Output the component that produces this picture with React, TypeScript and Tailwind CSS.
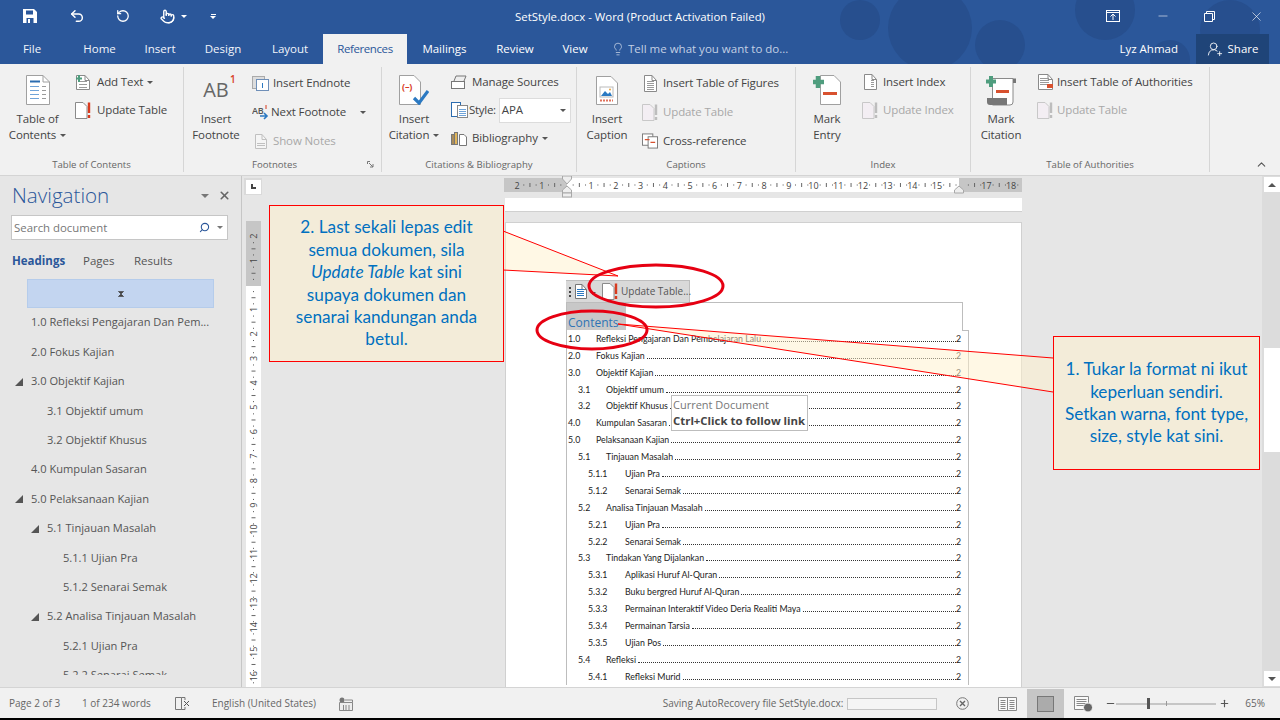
import { Pointer, RotateCcw, Undo2, UserRoundPlus, Lightbulb, X, Minus, Search, ChevronUp, Plus } from 'lucide-react';
import type { ReactNode } from 'react';

const Caret = ({ className = 'border-t-[#555]' }: { className?: string }) => (
    <span className={`inline-block w-0 h-0 border-x-[3px] border-x-transparent border-t-[3px] ${className}`} />
);

// small sheet of paper with a folded corner, used by most ribbon icons
const Sheet = ({ w = 16, h = 20, stroke = '#8a8a8a', fill = '#fff', children }: { w?: number; h?: number; stroke?: string; fill?: string; children?: ReactNode }) => (
    <svg width={w} height={h} viewBox={`0 0 ${w} ${h}`} className="shrink-0">
        <path d={`M.5 .5H${w - 5}L${w - 0.5} 5.5V${h - 0.5}H.5Z`} fill={fill} stroke={stroke} />
        <path d={`M${w - 5} .5V5.5H${w - 0.5}`} fill="none" stroke={stroke} />
        {children}
    </svg>
);

const lines = (x1: number, x2: number, ys: number[], color = '#9a9a9a') =>
    ys.map((y) => <path key={y} d={`M${x1} ${y + 0.5}H${x2}`} stroke={color} />);

const UpdateIcon = ({ muted = false }: { muted?: boolean }) => (
    <svg width="17" height="17" viewBox="0 0 17 17" className="shrink-0">
        <path d="M.5 .5H8L12 4.5V16.5H.5Z" fill={muted ? '#f3eef3' : '#fff'} stroke={muted ? '#c8c8c8' : '#8a8a8a'} />
        <path d="M14 .5V11M14 13V16" stroke={muted ? '#bdbdbd' : '#d83b1f'} strokeWidth="2.4" />
    </svg>
);

const TocIcon = () => (
    <svg width="24" height="30" viewBox="0 0 24 30">
        <path d="M.5 .5H17L23.5 7V29.5H.5Z" fill="#fff" stroke="#a0a0a0" />
        <path d="M17 .5V7H23.5" fill="none" stroke="#a0a0a0" />
        <path d="M4 6.5H14" stroke="#2b6cb0" strokeWidth="2" />
        {[11, 15, 19, 23].map((y) => (
            <g key={y}>
                <path d={`M4 ${y + 0.5}H13`} stroke="#6fa3d8" />
                <path d={`M16 ${y + 0.5}H20`} stroke="#9a9a9a" />
            </g>
        ))}
    </svg>
);

const CitationIcon = () => (
    <svg width="30" height="30" viewBox="0 0 30 30">
        <path d="M.5 .5H15L21.5 7V29.5H.5Z" fill="#fff" stroke="#a0a0a0" />
        <text x="3" y="15" fontSize="9" fontWeight="700" fill="#d83b1f" fontFamily="Open Sans">(–)</text>
        <path d="M15 23L20 28L29 16" fill="none" stroke="#2b79c2" strokeWidth="3.2" />
    </svg>
);

const CaptionIcon = () => (
    <svg width="22" height="29" viewBox="0 0 22 29">
        <path d="M.5 .5H15L21.5 7V28.5H.5Z" fill="#fff" stroke="#a0a0a0" />
        <rect x="4" y="11" width="13" height="10" fill="#fff" stroke="#bbb" />
        <path d="M5 20L9 15L12 18L14 16L16 20Z" fill="#2b79c2" />
        <circle cx="14" cy="13.5" r="1" fill="#e8a33d" />
        <path d="M4 24.5H17" stroke="#e0725c" strokeWidth="2" strokeDasharray="2 1" />
    </svg>
);

const MarkEntryIcon = () => (
    <svg width="28" height="30" viewBox="0 0 28 30">
        <path d="M7.5 .5H21L27.5 7V29.5H7.5Z" fill="#fff" stroke="#a0a0a0" />
        <path d="M5 1V13M0 7H11" stroke="#4f9d7e" strokeWidth="4.5" />
        <path d="M10 18.5H24" stroke="#d8512f" strokeWidth="3" />
    </svg>
);

const MarkCitationIcon = () => (
    <svg width="32" height="31" viewBox="0 0 32 31">
        <path d="M7.5 3.5H28V27Q28 30 25 30H7.5Z" fill="#fff" stroke="#8a8a8a" />
        <path d="M28 3.5H31V8H28" fill="#777" />
        <path d="M2 23H22V30H5Q2 30 2 27Z" fill="#777" />
        <path d="M6 1V12M1 6.5H11" stroke="#4f9d7e" strokeWidth="4" />
        <path d="M11 16.5H24" stroke="#d8512f" strokeWidth="3" />
    </svg>
);

const RibbonBig = ({ icon, label, second, caret, className }: { icon: ReactNode; label: string; second: ReactNode; caret?: boolean; className: string }) => (
    <div className={`flex flex-col items-center shrink-0 pt-[7px] ${className}`}>
        <div className="h-[32px] flex items-center justify-center">{icon}</div>
        <div className="mt-[5px] text-center leading-[16px] whitespace-nowrap">
            {label}
            <br />
            {second}
            {caret && <Caret className="ml-[4px] mb-[2px] border-t-[#555]" />}
        </div>
    </div>
);

const RibbonSmall = ({ icon, label, muted, caret, textClass = 'ml-[6px]', iconClass = 'w-[16px]' }: { icon: ReactNode; label: string; muted?: boolean; caret?: boolean; textClass?: string; iconClass?: string }) => (
    <div className={`flex items-center h-[20px] whitespace-nowrap ${muted ? 'text-[#a8a8a8]' : ''}`}>
        <span className={`flex justify-center shrink-0 ${iconClass}`}>{icon}</span>
        <span className={textClass}>{label}</span>
        {caret && <Caret className="ml-[4px] border-t-[#555]" />}
    </div>
);

const RibbonGroup = ({ label, className, children, labelClass = '' }: { label: string; className: string; children: ReactNode; labelClass?: string }) => (
    <div className={`relative flex flex-col h-[105px] mt-[3px] border-r border-[#d6d6d6] shrink-0 ${className}`}>
        <div className="flex flex-1">{children}</div>
        <div className={`h-[14px] leading-[14px] text-center text-[9.6px] tracking-normal text-[#666] ${labelClass}`}>{label}</div>
    </div>
);

const tabs = [
    { name: 'File', cls: 'w-[64px]' },
    { name: 'Home', cls: 'w-[71px]' },
    { name: 'Insert', cls: 'w-[50px]' },
    { name: 'Design', cls: 'w-[76px]' },
    { name: 'Layout', cls: 'w-[58px]' },
];

const navItems = [
    { t: '1.0 Refleksi Pengajaran Dan Pem...', pad: 'pl-[31px]' },
    { t: '2.0 Fokus Kajian', pad: 'pl-[31px]' },
    { t: '3.0 Objektif Kajian', pad: 'pl-[31px]', tri: 'left-[15px]' },
    { t: '3.1 Objektif umum', pad: 'pl-[47px]' },
    { t: '3.2 Objektif Khusus', pad: 'pl-[47px]' },
    { t: '4.0 Kumpulan Sasaran', pad: 'pl-[31px]' },
    { t: '5.0 Pelaksanaan Kajian', pad: 'pl-[31px]', tri: 'left-[15px]' },
    { t: '5.1 Tinjauan Masalah', pad: 'pl-[47px]', tri: 'left-[31px]' },
    { t: '5.1.1 Ujian Pra', pad: 'pl-[63px]' },
    { t: '5.1.2 Senarai Semak', pad: 'pl-[63px]' },
    { t: '5.2 Analisa Tinjauan Masalah', pad: 'pl-[47px]', tri: 'left-[31px]' },
    { t: '5.2.1 Ujian Pra', pad: 'pl-[63px]' },
    { t: '5.2.2 Senarai Semak', pad: 'pl-[63px]' },
];

const toc: [number, string, string][] = [
    [1, '1.0', 'Refleksi Pengajaran Dan Pembelajaran Lalu'],
    [1, '2.0', 'Fokus Kajian'],
    [1, '3.0', 'Objektif Kajian'],
    [2, '3.1', 'Objektif umum'],
    [2, '3.2', 'Objektif Khusus'],
    [1, '4.0', 'Kumpulan Sasaran'],
    [1, '5.0', 'Pelaksanaan Kajian'],
    [2, '5.1', 'Tinjauan Masalah'],
    [3, '5.1.1', 'Ujian Pra'],
    [3, '5.1.2', 'Senarai Semak'],
    [2, '5.2', 'Analisa Tinjauan Masalah'],
    [3, '5.2.1', 'Ujian Pra'],
    [3, '5.2.2', 'Senarai Semak'],
    [2, '5.3', 'Tindakan Yang Dijalankan'],
    [3, '5.3.1', 'Aplikasi Huruf Al-Quran'],
    [3, '5.3.2', 'Buku bergred Huruf Al-Quran'],
    [3, '5.3.3', 'Permainan Interaktif Video Deria Realiti Maya'],
    [3, '5.3.4', 'Permainan Tarsia'],
    [3, '5.3.5', 'Ujian Pos'],
    [2, '5.4', 'Refleksi'],
    [3, '5.4.1', 'Refleksi Murid'],
];

const levelNum: Record<number, string> = {
    1: 'pl-[1px] w-[29px]',
    2: 'pl-[11px] w-[39px]',
    3: 'pl-[21px] w-[58px]',
};

const rulerUnits = Array.from({ length: 21 }, (_, i) => i - 2);

const HRuler = () => {
    const x0 = 62.5;
    const step = 24.7;
    return (
        <svg width="518" height="22" viewBox="0 0 518 22" className="overflow-visible block">
            <rect x="0" y="0" width="518" height="14" fill="#c6c6c6" />
            <rect x="63" y="0" width="392" height="14" fill="#fff" />
            {rulerUnits.map((n) => {
                const x = x0 + n * step;
                return (
                    <g key={n}>
                        {n !== 0 && n !== 16 && x < 516 && (
                            <text x={x} y="10.5" textAnchor="middle" fontSize="9" fill="#444" fontFamily="Open Sans">
                                {Math.abs(n)}
                            </text>
                        )}
                        {[0.25, 0.75].map((f) =>
                            x + f * step > 2 && x + f * step < 516 ? <rect key={f} x={x + f * step} y="6.5" width="1" height="1" fill="#555" /> : null,
                        )}
                        {x + step / 2 < 516 && <rect x={x + step / 2} y="5" width="1" height="4" fill="#666" />}
                    </g>
                );
            })}
            <path d="M58.5 -2H67.5V1L63 6L58.5 1Z" fill="#eee" stroke="#a8a8a8" />
            <path d="M63 8L67.5 12V15H58.5V12Z" fill="#eee" stroke="#a8a8a8" />
            <rect x="58.5" y="15" width="9" height="4" fill="#eee" stroke="#a8a8a8" />
            <path d="M455 8L459.5 12V15H450.5V12Z" fill="#eee" stroke="#a8a8a8" />
        </svg>
    );
};

const VRuler = () => {
    const y0 = 109;
    const step = 24.45;
    return (
        <svg width="15" height="511" viewBox="0 0 15 511" className="block">
            <rect x="0" y="45" width="15" height="65" fill="#c6c6c6" />
            <rect x="0" y="110" width="15" height="401" fill="#fff" />
            {rulerUnits.map((n) => {
                const y = y0 + n * step;
                return (
                    <g key={n}>
                        {n !== 0 && (
                            <text x="7.5" y={y} transform={`rotate(-90 7.5 ${y})`} textAnchor="middle" dominantBaseline="central" fontSize="9" fill="#444" fontFamily="Open Sans">
                                {Math.abs(n)}
                            </text>
                        )}
                        {[0.25, 0.75].map((f) => (y + f * step > 50 ? <rect key={f} x="7" y={y + f * step} width="1" height="1" fill="#555" /> : null))}
                        {y + step / 2 > 50 && <rect x="5.5" y={y + step / 2} width="4" height="1" fill="#666" />}
                    </g>
                );
            })}
        </svg>
    );
};

const Overlay = () => (
    <svg width="1280" height="720" viewBox="0 0 1280 720" className="absolute inset-0 pointer-events-none">
        <path d="M503 231L618 276L503 270" fill="#fff2cc" fillOpacity="0.5" stroke="#f00" />
        <path d="M1053 358L618 324L1053 392" fill="#fff2cc" fillOpacity="0.5" stroke="#f00" />
        <ellipse cx="656" cy="286" rx="67" ry="21" fill="none" stroke="#e60012" strokeWidth="3" />
        <ellipse cx="592" cy="330" rx="55" ry="19" fill="none" stroke="#e60012" strokeWidth="3" />
    </svg>
);

export default function App() {
    return (
        <div className="relative w-[1280px] h-[720px] overflow-hidden flex flex-col bg-black font-['Open_Sans',sans-serif] text-[11.5px] tracking-[-0.12px] text-[#444]">
            {/* title bar + tabs */}
            <div className="relative h-[64px] shrink-0 bg-[#2b579a] text-white overflow-hidden tracking-normal">
                <svg width="480" height="64" viewBox="0 0 480 64" className="absolute left-[780px] top-0">
                    <g fill="#274f8e">
                        <circle cx="150" cy="28" r="42" />
                        <circle cx="80" cy="20" r="20" />
                        <circle cx="220" cy="45" r="25" />
                        <circle cx="325" cy="10" r="30" />
                        <circle cx="450" cy="30" r="30" />
                        <circle cx="390" cy="60" r="20" />
                    </g>
                </svg>
                <div className="relative flex items-center h-[32px]">
                    <span className="w-[60px] flex justify-center">
                        <svg width="14" height="14" viewBox="0 0 14 14">
                            <path d="M0 0H11L14 3V14H0Z" fill="#fff" />
                            <rect x="3" y="1.5" width="7" height="4" fill="#2b579a" />
                            <rect x="3.5" y="9" width="7" height="5" fill="#2b579a" />
                            <rect x="5" y="10" width="2" height="4" fill="#fff" />
                        </svg>
                    </span>
                    <span className="w-[34px] flex justify-center">
                        <Undo2 size={16} strokeWidth={2.2} />
                    </span>
                    <span className="w-[58px] flex justify-center">
                        <RotateCcw size={14} strokeWidth={2.2} />
                    </span>
                    <span className="w-[30px] flex justify-center">
                        <Pointer size={15} strokeWidth={2.2} />
                    </span>
                    <Caret className="border-t-white ml-[-1px]" />
                    <span className="ml-[23px] flex flex-col items-center gap-[1px]">
                        <span className="w-[5px] h-px bg-white" />
                        <Caret className="border-t-white" />
                    </span>
                    <div className="absolute left-0 right-0 top-[9px] text-center text-[11.4px] leading-[16px]">SetStyle.docx - Word (Product Activation Failed)</div>
                    <div className="absolute right-0 top-0 h-[32px] flex items-center">
                        <svg width="14" height="12" viewBox="0 0 14 12" className="mr-[36px]">
                            <rect x=".5" y=".5" width="13" height="11" fill="none" stroke="#fff" />
                            <path d="M.5 2.5H13.5M7 10V4.5M4.5 6.5L7 4L9.5 6.5" fill="none" stroke="#fff" />
                        </svg>
                        <Minus size={14} strokeWidth={1} className="mr-[34px]" />
                        <svg width="11" height="11" viewBox="0 0 11 11" className="mr-[34px]">
                            <path d="M.5 2.5H8.5V10.5H.5ZM2.5 2.5V.5H10.5V8.5H8.5" fill="none" stroke="#fff" />
                        </svg>
                        <X size={15} strokeWidth={1} className="mr-[16px]" />
                    </div>
                </div>
                <div className="absolute left-0 right-0 bottom-0 h-[30px] flex items-center text-[11.5px]">
                    {tabs.map((t) => (
                        <div key={t.name} className={`text-center text-[#f2f5fa] ${t.cls}`}>
                            {t.name}
                        </div>
                    ))}
                    <div className="ml-[4px] w-[84px] h-full bg-[#f1f1f1] text-[#2b579a] flex items-center justify-center tracking-[-0.4px]">References</div>
                    <div className="w-[75px] text-center">Mailings</div>
                    <div className="w-[66px] text-center">Review</div>
                    <div className="w-[54px] text-center">View</div>
                    <Lightbulb size={14} strokeWidth={1.2} className="ml-[9px] text-[#d5deec]" />
                    <div className="ml-[3px] text-[#c3d0e4]">Tell me what you want to do...</div>
                    <div className="ml-auto mr-[18px]">Lyz Ahmad</div>
                    <div className="mr-[11px] w-[73px] h-full bg-[#1f4478] flex items-center justify-center gap-[5px]">
                        <UserRoundPlus size={16} strokeWidth={1.3} />
                        Share
                    </div>
                </div>
            </div>

            {/* ribbon */}
            <div className="h-[112px] shrink-0 flex bg-[#f1f1f1] border-b border-[#d4d4d4]">
                <RibbonGroup label="Table of Contents" className="w-[184px]">
                    <RibbonBig icon={<TocIcon />} label="Table of" second="Contents" caret className="w-[75px]" />
                    <div className="flex flex-col gap-[8px] pt-[5px]">
                        <RibbonSmall
                            label="Add Text"
                            caret
                            icon={
                                <Sheet w={14} h={15}>
                                    {lines(3, 11, [6, 9, 12])}
                                    <path d="M3 0V7M0 3.5H6" stroke="#4f9d7e" strokeWidth="2" />
                                </Sheet>
                            }
                        />
                        <RibbonSmall label="Update Table" icon={<UpdateIcon />} />
                    </div>
                </RibbonGroup>
                <RibbonGroup label="Footnotes" className="w-[198px]" labelClass="pr-[16px]">
                    <RibbonBig
                        icon={
                            <span className="relative text-[20px] leading-none text-[#666]">
                                AB<span className="absolute top-[-6px] right-[-7px] text-[10px] font-semibold text-[#d83b1f]">1</span>
                            </span>
                        }
                        label="Insert"
                        second="Footnote"
                        className="w-[52px] ml-[6px]"
                    />
                    <div className="flex flex-col gap-[9px] pt-[6px] ml-[10px]">
                        <RibbonSmall
                            label="Insert Endnote"
                            iconClass="w-[17px]"
                            textClass="ml-[4px]"
                            icon={
                                <svg width="17" height="15" viewBox="0 0 17 15">
                                    <rect x=".5" y=".5" width="12" height="12" fill="#ddd" stroke="#aaa" />
                                    <rect x="4.5" y="3.5" width="12" height="11" fill="#fff" stroke="#6f8fb8" />
                                    <path d="M10.5 7V12" stroke="#2b79c2" />
                                </svg>
                            }
                        />
                        <div className="flex items-center">
                            <RibbonSmall
                                label="Next Footnote"
                                iconClass="w-[17px]"
                                textClass="ml-[2px]"
                                icon={
                                    <svg width="17" height="16" viewBox="0 0 17 16">
                                        <text x="0" y="10" fontSize="9" fill="#555" fontFamily="Open Sans" fontWeight="600">AB</text>
                                        <path d="M8 12H14M12 9L15 12L12 15" fill="none" stroke="#2b79c2" strokeWidth="1.6" />
                                        <path d="M14 1V5" stroke="#d83b1f" />
                                    </svg>
                                }
                            />
                            <Caret className="ml-[14px] border-t-[#555]" />
                        </div>
                        <RibbonSmall
                            label="Show Notes"
                            muted
                            iconClass="w-[17px]"
                            textClass="ml-[4px]"
                            icon={
                                <Sheet w={12} h={15} stroke="#c0c0c0" fill="#f5f5f5">
                                    {lines(2, 10, [9, 11], '#c0c0c0')}
                                </Sheet>
                            }
                        />
                    </div>
                    <svg width="7" height="7" viewBox="0 0 7 7" className="absolute right-[7px] bottom-[4px]">
                        <path d="M.5 3V.5H3M2 2L6 6M6 3V6H3" fill="none" stroke="#777" />
                    </svg>
                </RibbonGroup>
                <RibbonGroup label="Citations & Bibliography" className="w-[195px]">
                    <RibbonBig icon={<CitationIcon />} label="Insert" second="Citation" caret className="w-[58px] ml-[3px]" />
                    <div className="flex flex-col gap-[8px] pt-[5px] ml-[8px]">
                        <RibbonSmall
                            label="Manage Sources"
                            iconClass="w-[16px]"
                            textClass="ml-[5px]"
                            icon={
                                <svg width="16" height="14" viewBox="0 0 16 14">
                                    <rect x=".5" y="6.5" width="13" height="7" fill="#fff" stroke="#777" />
                                    <path d="M3 6L5 1H15L13 6" fill="#eee" stroke="#777" />
                                </svg>
                            }
                        />
                        <div className="flex items-center h-[20px]">
                            <svg width="17" height="16" viewBox="0 0 17 16" className="shrink-0">
                                <rect x=".5" y=".5" width="9" height="14" fill="#fff" stroke="#2b6cb0" />
                                <rect x="6.5" y="3.5" width="10" height="12" fill="#fff" stroke="#888" />
                                {lines(8, 15, [7, 9, 11, 13], '#6fa3d8')}
                            </svg>
                            <span className="ml-[1px] mr-[3px] tracking-tight">Style:</span>
                            <div className="w-[72px] h-[25px] my-[-3px] bg-white border border-[#dcdcdc] flex items-center justify-between pl-[2px] pr-[4px]">
                                APA
                                <Caret />
                            </div>
                        </div>
                        <RibbonSmall
                            label="Bibliography"
                            caret
                            textClass="ml-[5px]"
                            icon={
                                <svg width="16" height="16" viewBox="0 0 16 16">
                                    <rect x=".5" y="4.5" width="3" height="10" fill="#a98c5a" stroke="#777" />
                                    <rect x="3.5" y="2.5" width="3" height="12" fill="#e2b659" stroke="#777" />
                                    <path d="M8.5 4.5H13L15.5 7V15.5H8.5Z" fill="#fff" stroke="#777" />
                                </svg>
                            }
                        />
                    </div>
                </RibbonGroup>
                <RibbonGroup label="Captions" className="w-[219px]">
                    <RibbonBig icon={<CaptionIcon />} label="Insert" second="Caption" className="w-[60px]" />
                    <div className="flex flex-col gap-[9px] pt-[6px] ml-[5px]">
                        <RibbonSmall
                            label="Insert Table of Figures"
                            textClass="ml-[5px]"
                            iconClass="w-[16px]"
                            icon={<Sheet w={13} h={17}>{lines(3, 10, [6, 8, 10, 12, 14])}</Sheet>}
                        />
                        <RibbonSmall label="Update Table" muted textClass="ml-[5px]" iconClass="w-[16px]" icon={<UpdateIcon muted />} />
                        <RibbonSmall
                            label="Cross-reference"
                            textClass="ml-[5px]"
                            iconClass="w-[16px]"
                            icon={
                                <svg width="17" height="16" viewBox="0 0 17 16">
                                    <rect x=".5" y=".5" width="11" height="12" fill="#fff" stroke="#777" />
                                    <rect x="6.5" y="3.5" width="10" height="12" fill="#fff" stroke="#777" />
                                    <path d="M3 6.5H8M9 9.5H14" stroke="#d8512f" strokeWidth="1.4" />
                                </svg>
                            }
                        />
                    </div>
                </RibbonGroup>
                <RibbonGroup label="Index" className="w-[175px]">
                    <RibbonBig icon={<MarkEntryIcon />} label="Mark" second="Entry" className="w-[62px]" />
                    <div className="flex flex-col gap-[8px] pt-[5px] ml-[4px]">
                        <RibbonSmall label="Insert Index" textClass="ml-[5px]" icon={<Sheet w={13} h={16}>{lines(7, 10, [6, 8, 10, 12])}</Sheet>} />
                        <RibbonSmall label="Update Index" muted textClass="ml-[5px]" icon={<UpdateIcon muted />} />
                    </div>
                </RibbonGroup>
                <RibbonGroup label="Table of Authorities" className="w-[239px]">
                    <RibbonBig icon={<MarkCitationIcon />} label="Mark" second="Citation" className="w-[60px]" />
                    <div className="flex flex-col gap-[8px] pt-[5px] ml-[6px]">
                        <RibbonSmall
                            label="Insert Table of Authorities"
                            textClass="ml-[4px]"
                            icon={
                                <Sheet w={15} h={16}>
                                    {lines(2, 11, [4, 6, 8, 10])}
                                    <rect x="9" y="10" width="6" height="4" fill="#d8512f" />
                                </Sheet>
                            }
                        />
                        <RibbonSmall label="Update Table" muted textClass="ml-[4px]" icon={<UpdateIcon muted />} />
                    </div>
                </RibbonGroup>
                <div className="flex-1 flex items-end justify-end pr-[12px] pb-[4px]">
                    <ChevronUp size={13} strokeWidth={2} className="text-[#555]" />
                </div>
            </div>

            {/* workspace */}
            <div className="h-[511px] shrink-0 flex bg-[#e6e6e6] tracking-normal">
                {/* navigation pane */}
                <div className="w-[242px] shrink-0 border-r border-[#c6c6c6] flex flex-col pb-[12px]">
                    <div className="flex items-center h-[39px] pl-[12px] pr-[10px]">
                        <span className="text-[20.6px] font-light text-[#2b579a] leading-none">Navigation</span>
                        <Caret className="ml-auto border-x-[4px] border-t-[4px] border-t-[#777]" />
                        <X size={13} strokeWidth={3} className="ml-[9px] text-[#666]" />
                    </div>
                    <div className="ml-[11px] w-[217px] h-[25px] shrink-0 bg-white border border-[#c6c6c6] flex items-center pl-[2px] pr-[4px] text-[11.4px] text-[#777]">
                        Search document
                        <Search size={11} strokeWidth={2.4} className="ml-auto text-[#2b579a] -scale-x-100" />
                        <Caret className="ml-[7px]" />
                    </div>
                    <div className="flex items-center h-[39px] pt-[3px] pl-[12px] text-[#555] shrink-0">
                        <span className="font-bold text-[#2b579a] w-[71px]">Headings</span>
                        <span className="w-[51px]">Pages</span>
                        <span>Results</span>
                    </div>
                    <div className="ml-[27px] w-[187px] h-[29px] shrink-0 bg-[#c3d5f0] border border-[#b5cceb] flex items-center justify-center">
                        <svg width="6" height="6" viewBox="0 0 6 6">
                            <path d="M0 .5H6M0 5.5H6M1 1L3 3L5 1ZM1 5L3 3L5 5Z" fill="#444" stroke="#444" strokeWidth=".7" />
                        </svg>
                    </div>
                    <div className="flex-1 min-h-0 overflow-hidden text-[11.1px] text-[#555]">
                        {navItems.map((n) => (
                            <div key={n.t} className={`relative h-[29.4px] shrink-0 flex items-center whitespace-nowrap ${n.pad}`}>
                                {n.tri && <span className={`absolute top-[11px] w-0 h-0 border-l-[8px] border-l-transparent border-b-[8px] border-b-[#555] ${n.tri}`} />}
                                {n.t}
                            </div>
                        ))}
                    </div>
                </div>

                {/* vertical ruler */}
                <div className="relative w-[21px] shrink-0 pl-[3.5px]">
                    <VRuler />
                    <div className="absolute top-[2px] left-[2px] w-[18px] h-[17px] bg-[#dadada] flex items-center justify-center">
                        <div className="w-[15px] h-[14px] bg-white flex items-center justify-center">
                            <div className="w-[5px] h-[5px] border-l-2 border-b-2 border-[#444]" />
                        </div>
                    </div>
                </div>

                {/* document */}
                <div className="flex-1 min-w-0 flex flex-col overflow-hidden">
                    <div className="ml-[241px] mt-[2px] w-[518px] h-[14px] shrink-0">
                        <HRuler />
                    </div>
                    <div className="ml-[242px] w-[517px] h-[14px] mt-[6px] shrink-0 bg-white border-b border-[#d0d0d0]" />
                    <div className="ml-[242px] w-[517px] flex-1 mt-[10px] bg-white border-t border-x border-[#d0d0d0] pl-[60px] pt-[57px] overflow-hidden relative">
                        <div className="flex items-center w-[124px] h-[22px] bg-[#d9d9d9] border-t border-r border-[#bdbdbd] text-[10px] text-[#555]">
                            <span className="ml-[3px] flex flex-col gap-[2px]">
                                <span className="w-[2px] h-[2px] bg-[#444]" />
                                <span className="w-[2px] h-[2px] bg-[#444]" />
                                <span className="w-[2px] h-[2px] bg-[#444]" />
                            </span>
                            <span className="ml-[4px] flex">
                                <Sheet w={12} h={15} stroke="#777">
                                    {lines(2, 9, [5, 7, 9, 11], '#2b79c2')}
                                </Sheet>
                            </span>
                            <Caret className="ml-[3px] mt-[4px] border-t-[#555]" />
                            <span className="ml-[6px] flex">
                                <UpdateIcon />
                            </span>
                            <span className="whitespace-nowrap ml-[2px]">Update Table...</span>
                        </div>
                        <div className="relative w-[403px] border-l border-[#bdbdbd]">
                            <div className="w-[396px] h-[28px] border-t border-r border-[#bdbdbd]">
                                <div className="w-[59px] h-[27px] bg-[#c8c8c8] flex items-end pl-[1px] text-[12px] text-[#2e74b5] leading-[15px]">Contents</div>
                            </div>
                            <div className="absolute right-0 top-[28px] w-[7px] border-t border-[#bdbdbd]" />
                            <div className="absolute right-0 top-[28px] bottom-0 border-r border-[#bdbdbd]" />
                            <div className="pr-[8px] font-['Lato',sans-serif] text-[8.8px] text-[#222]">
                                {toc.map(([lvl, num, title]) => (
                                    <div key={num} className="flex items-center h-[16.9px] whitespace-nowrap">
                                        <span className={`shrink-0 ${levelNum[lvl]}`}>{num}</span>
                                        <span className="shrink-0 mr-[2px]">{title}</span>
                                        <span className="flex-1 min-w-0 self-end mb-[5px] border-b border-dotted border-[#333]" />
                                        <span className="shrink-0">2</span>
                                    </div>
                                ))}
                            </div>
                            <div className="absolute left-[104px] top-[93px] w-[137px] h-[36px] bg-white border border-[#bdbdbd] pl-[1px] pt-[1px] whitespace-nowrap text-[11px] leading-[16px] text-[#777]">
                                Current Document
                                <div className="font-bold text-[11.4px] text-[#444]">Ctrl+Click to follow link</div>
                            </div>
                        </div>
                    </div>
                </div>

                {/* scrollbar */}
                <div className="w-[18px] shrink-0 bg-[#dcdcdc] flex flex-col items-center pl-[1px]">
                    <div className="mt-[1px] w-[16px] h-[15px] bg-white flex items-center justify-center">
                        <span className="w-0 h-0 border-x-[4px] border-x-transparent border-b-[4px] border-b-[#555]" />
                    </div>
                    <div className="mt-[156px] w-[16px] h-[104px] bg-white" />
                    <div className="mt-auto mb-[1px] w-[16px] h-[15px] bg-white flex items-center justify-center">
                        <Caret className="border-x-[4px] border-t-[4px] border-t-[#555]" />
                    </div>
                </div>
            </div>

            {/* status bar */}
            <div className="h-[31px] shrink-0 bg-[#f1f1f1] border-t border-[#d4d4d4] flex items-center text-[10px] text-[#666] whitespace-nowrap pt-[1px] tracking-normal">
                <span className="ml-[9px] w-[73px]">Page 2 of 3</span>
                <span className="w-[93px]">1 of 234 words</span>
                <svg width="15" height="13" viewBox="0 0 15 13" className="shrink-0">
                    <path d="M.5 .5H6.5V12.5H.5ZM6.5 .5H10V3M6.5 12.5H10V10" fill="none" stroke="#777" />
                    <path d="M9 4L14 9M14 4L9 9" stroke="#555" />
                </svg>
                <span className="ml-[22px] w-[127px]">English (United States)</span>
                <svg width="14" height="14" viewBox="0 0 14 14" className="shrink-0">
                    <circle cx="3" cy="3" r="2.5" fill="#777" />
                    <path d="M.5 5.5H13.5V13.5H.5Z" fill="#eee" stroke="#888" />
                    <path d="M6 3H13.5V5.5M4.5 8V13M7 8V13M10 8V13" fill="none" stroke="#888" />
                </svg>
                <span className="ml-auto mr-[4px]">Saving AutoRecovery file SetStyle.docx:</span>
                <div className="w-[90px] h-[12px] bg-[#f5f5f5] border border-[#c6c6c6] shrink-0" />
                <svg width="13" height="13" viewBox="0 0 13 13" className="ml-[19px] shrink-0">
                    <circle cx="6.5" cy="6.5" r="5.8" fill="none" stroke="#777" />
                    <path d="M4 4L9 9M9 4L4 9" stroke="#666" strokeWidth="1.4" />
                </svg>
                <svg width="19" height="16" viewBox="0 0 19 16" className="ml-[29px] shrink-0">
                    <path d="M.5 1.5H9.5V14.5H.5ZM9.5 1.5H18.5V14.5H9.5Z" fill="#fafafa" stroke="#888" />
                    {lines(2.5, 7.5, [4, 6, 8, 10, 12], '#888')}
                    {lines(11.5, 16.5, [4, 6, 8, 10, 12], '#888')}
                </svg>
                <div className="ml-[10px] w-[37px] h-full bg-[#c6c6c6] flex items-center justify-center shrink-0">
                    <div className="w-[17px] h-[16px] bg-[#ababab] border border-[#777]" />
                </div>
                <svg width="19" height="16" viewBox="0 0 19 16" className="ml-[10px] shrink-0">
                    <path d="M.5 .5H14.5V13.5H.5Z" fill="#fafafa" stroke="#888" />
                    {lines(2.5, 12.5, [3, 5, 7, 9], '#888')}
                    <circle cx="14" cy="11.5" r="4.5" fill="#666" stroke="#f1f1f1" />
                </svg>
                <Minus size={11} strokeWidth={2.5} className="ml-[12px] text-[#555] shrink-0" />
                <div className="relative w-[100px] h-[2px] bg-[#c6c6c6] shrink-0">
                    <span className="absolute left-[31px] top-[-5px] w-[3px] h-[11px] bg-[#555]" />
                    <span className="absolute left-[50px] top-[-2px] w-px h-[5px] bg-[#999]" />
                </div>
                <Plus size={11} strokeWidth={2.5} className="ml-[3px] text-[#555] shrink-0" />
                <span className="ml-[15px] mr-[15px]">65%</span>
            </div>
            <div className="flex-1 bg-black" />

            {/* annotations */}
            <Overlay />
            <div className="absolute left-[269px] top-[205px] w-[235px] h-[157px] bg-[#fff2cc]/50 border border-[#f00] flex items-center justify-center text-center font-['Lato',sans-serif] text-[17.2px] leading-[22.4px] tracking-normal text-[#0070c0]">
                <div>
                    2. Last sekali lepas edit
                    <br />
                    semua dokumen, sila
                    <br />
                    <em>Update Table</em> kat sini
                    <br />
                    supaya dokumen dan
                    <br />
                    senarai kandungan anda
                    <br />
                    betul.
                </div>
            </div>
            <div className="absolute left-[1053px] top-[336px] w-[207px] h-[134px] bg-[#fff2cc]/50 border border-[#f00] flex items-center justify-center text-center font-['Lato',sans-serif] text-[17.2px] leading-[22.4px] tracking-normal text-[#0070c0]">
                <div>
                    1. Tukar la format ni ikut
                    <br />
                    keperluan sendiri.
                    <br />
                    Setkan warna, font type,
                    <br />
                    size, style kat sini.
                </div>
            </div>
        </div>
    );
}
